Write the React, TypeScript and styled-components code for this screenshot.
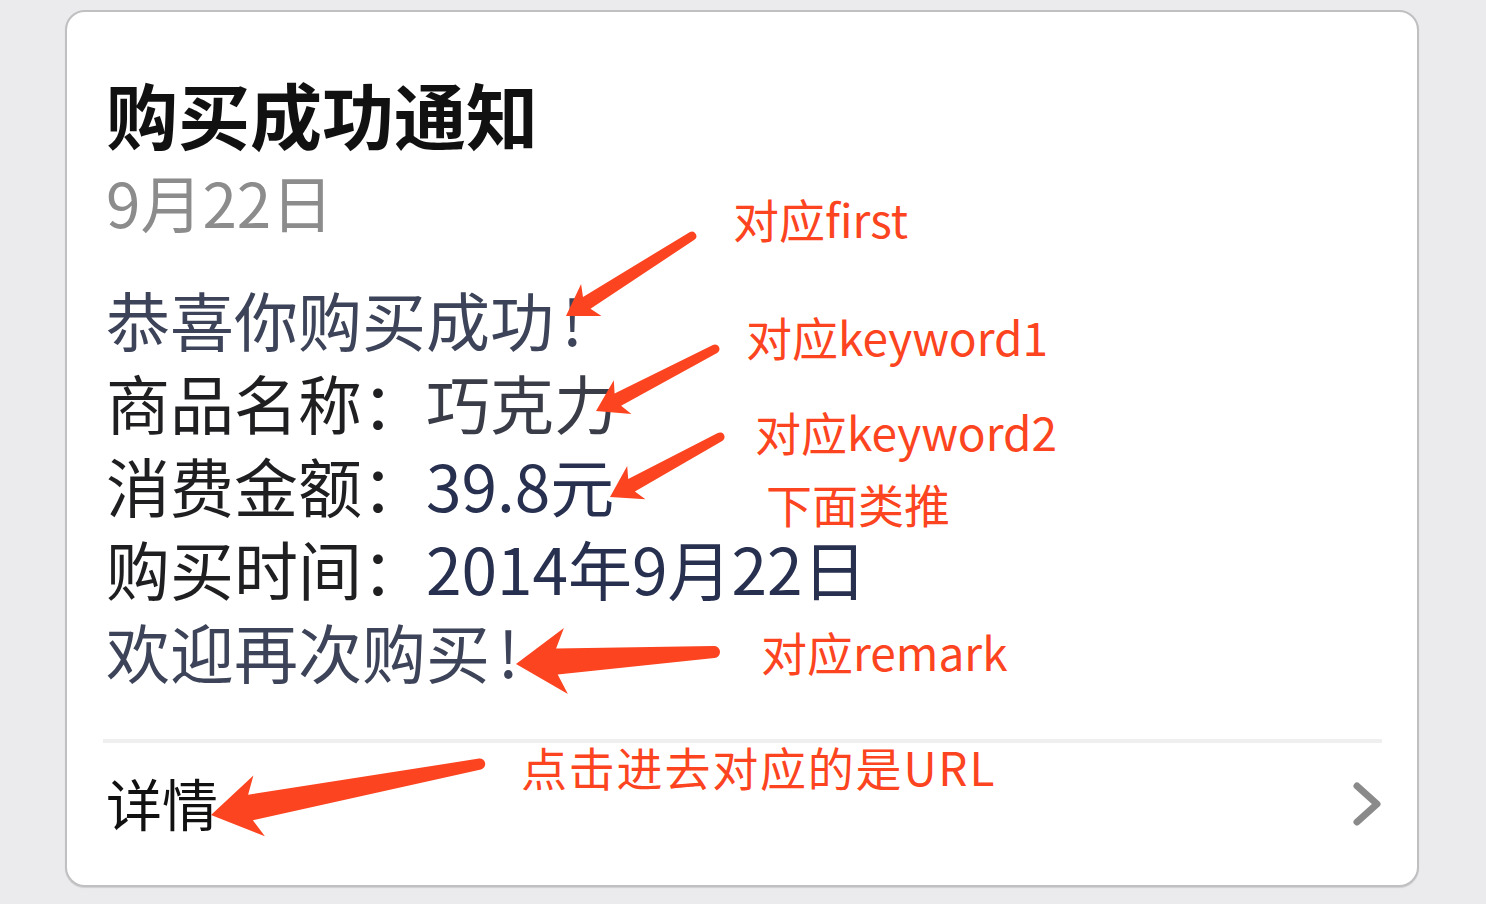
import React from "react";
import styled, { createGlobalStyle } from "styled-components";

const Global = createGlobalStyle`
  html, body { margin: 0; padding: 0; background: #ebebed; }
  body { font-family: "Noto Sans CJK SC", "Noto Sans", sans-serif; }
`;

const Page = styled.div`
  position: relative;
  width: 1486px;
  height: 904px;
  overflow: hidden;
  background: #ebebed;
  padding: 10px 0 0 65px;
  box-sizing: border-box;
`;

const Card = styled.div`
  width: 1354px;
  height: 877px;
  box-sizing: border-box;
  background: #fff;
  border: 2px solid #c0c0c2;
  border-radius: 20px;
  box-shadow: 0 1px 1px rgba(0, 0, 0, 0.12);
  display: flex;
  flex-direction: column;
  padding-top: 57px;
`;

const Body = styled.div`
  display: flex;
  flex-direction: column;
  padding: 0 0 0 39px;
`;

const Title = styled.div`
  font-size: 72px;
  line-height: 88px;
  font-weight: 700;
  color: #111;
`;

const DateLine = styled.div`
  font-size: 62px;
  line-height: 62px;
  margin-top: 13px;
  color: #8c8c8c;
`;

const Lines = styled.div`
  margin-top: 45px;
  display: flex;
  flex-direction: column;
`;

const Line = styled.div<{ $tone?: "soft" }>`
  font-size: 64px;
  line-height: 83px;
  white-space: nowrap;
  color: ${(p) => (p.$tone === "soft" ? "#3d4459" : "#1f1f22")};
`;

const Bang = styled.span`
  margin-left: 8px;
`;

const Value = styled.span<{ $navy?: boolean }>`
  color: ${(p) => (p.$navy ? "#283050" : "#3a3d48")};
`;

const Divider = styled.div`
  margin: 47px 35px 0 36px;
  height: 4px;
  background: #efefef;
`;

const Footer = styled.div`
  height: 118px;
  display: flex;
  align-items: center;
  justify-content: space-between;
  padding: 0 35px 0 39px;
`;

const Detail = styled.span`
  font-size: 56px;
  line-height: 1;
  color: #111;
`;

const Chevron = styled.svg`
  width: 30px;
  height: 44px;
  display: block;
  margin-top: 4px;
`;

const Overlay = styled.svg`
  position: absolute;
  left: 0;
  top: 0;
  width: 1486px;
  height: 904px;
  pointer-events: none;
`;

const Note = styled.div<{ $x: number; $y: number; $spread?: number }>`
  position: absolute;
  left: ${(p) => p.$x}px;
  top: ${(p) => p.$y}px;
  font-size: 46px;
  line-height: 46px;
  letter-spacing: ${(p) => p.$spread ?? 0}px;
  color: #fc4420;
  white-space: nowrap;
`;

type Arrow = {
  t: [number, number];
  p: [number, number];
  wt: number;
  ws: number;
  L: number;
  H: number;
};

const arrows: Arrow[] = [
  { t: [692, 236], p: [566, 316], wt: 9, ws: 14, L: 30, H: 19 },
  { t: [715, 349], p: [596, 411], wt: 9, ws: 14, L: 30, H: 19 },
  { t: [720, 437], p: [610, 497], wt: 9, ws: 14, L: 30, H: 19 },
  { t: [714, 652], p: [516, 664], wt: 12, ws: 26, L: 50, H: 33 },
  { t: [480, 764], p: [211, 815], wt: 11, ws: 26, L: 49, H: 31 },
];

function arrowPath(a: Arrow): string {
  const [tx, ty] = a.t;
  const [px, py] = a.p;
  const dx = tx - px;
  const dy = ty - py;
  const len = Math.hypot(dx, dy);
  const ux = dx / len;
  const uy = dy / len;
  const nx = -uy;
  const ny = ux;
  const pt = (along: number, side: number) =>
    `${(px + ux * along + nx * side).toFixed(1)} ${(py + uy * along + ny * side).toFixed(1)}`;
  const neck = a.L * 0.82;
  const r = a.wt / 2;
  return [
    `M ${pt(0, 0)}`,
    `L ${pt(a.L, a.H)}`,
    `L ${pt(neck, a.ws / 2)}`,
    `L ${pt(len, r)}`,
    `A ${r} ${r} 0 0 0 ${pt(len, -r)}`,
    `L ${pt(neck, -a.ws / 2)}`,
    `L ${pt(a.L, -a.H)}`,
    "Z",
  ].join(" ");
}

export default function App() {
  return (
    <>
      <Global />
      <Page>
        <Card>
          <Body>
            <Title>购买成功通知</Title>
            <DateLine>9月22日</DateLine>
            <Lines>
              <Line $tone="soft">
                恭喜你购买成功<Bang>!</Bang>
              </Line>
              <Line>
                商品名称：<Value>巧克力</Value>
              </Line>
              <Line>
                消费金额：<Value $navy>39.8元</Value>
              </Line>
              <Line>
                购买时间：<Value $navy>2014年9月22日</Value>
              </Line>
              <Line $tone="soft">
                欢迎再次购买<Bang>!</Bang>
              </Line>
            </Lines>
          </Body>
          <Divider />
          <Footer>
            <Detail>详情</Detail>
            <Chevron viewBox="0 0 30 44">
              <polyline
                points="5,4 25,22 5,40"
                fill="none"
                stroke="#8a8a8a"
                strokeWidth="7"
                strokeLinecap="round"
                strokeLinejoin="round"
              />
            </Chevron>
          </Footer>
        </Card>
        <Overlay viewBox="0 0 1486 904">
          {arrows.map((a, i) => (
            <path key={i} d={arrowPath(a)} fill="#fc4420" />
          ))}
        </Overlay>
        <Note $x={733} $y={195}>对应first</Note>
        <Note $x={746} $y={313}>对应keyword1</Note>
        <Note $x={755} $y={408}>对应keyword2</Note>
        <Note $x={766} $y={480}>下面类推</Note>
        <Note $x={761} $y={628}>对应remark</Note>
        <Note $x={521} $y={743} $spread={1.8}>点击进去对应的是URL</Note>
      </Page>
    </>
  );
}
